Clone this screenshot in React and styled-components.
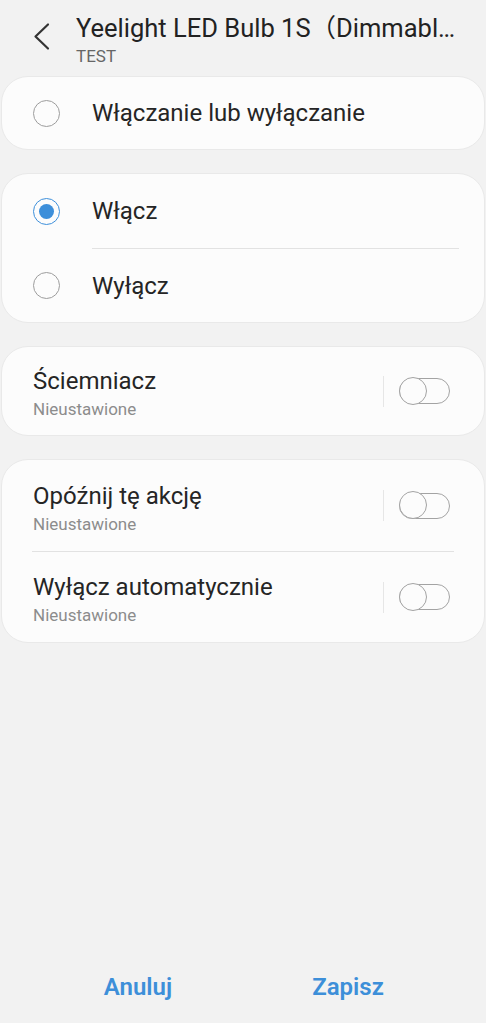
import React from "react"
import styled, { createGlobalStyle } from "styled-components"

const Global = createGlobalStyle`
  html, body {
    margin: 0;
    padding: 0;
    background: #f2f2f2;
  }
  body {
    font-family: Roboto, "Noto Sans CJK SC", "Liberation Sans", sans-serif;
    color: #252525;
  }
`

const Page = styled.div`
  min-height: 1023px;
  display: flex;
  flex-direction: column;
  background: #f2f2f2;
`

const Header = styled.header`
  display: flex;
  align-items: flex-start;
  padding: 13px 20px 0 28px;
  height: 63px;
  box-sizing: border-box;
  height: 76px;
`

const BackButton = styled.button`
  width: 28px;
  height: 46px;
  margin-right: 20px;
  padding: 0;
  border: 0;
  background: none;
  flex-shrink: 0;
`

const HeaderText = styled.div`
  display: flex;
  flex-direction: column;
  gap: 3px;
  min-width: 0;
  flex: 1;
`

const Title = styled.h1`
  margin: 0;
  font-size: 25.5px;
  line-height: 30px;
  font-weight: 400;
  color: #222;
  white-space: nowrap;
`

const Subtitle = styled.div`
  font-size: 17px;
  line-height: 20px;
  color: #666;
`

const Cards = styled.main`
  display: flex;
  flex-direction: column;
  gap: 23px;
  padding: 0 1px;
`

const Card = styled.section`
  background: #fcfcfc;
  border: 1px solid #e9e9e9;
  border-radius: 27px;
  overflow: hidden;
`

const RadioRow = styled.label`
  display: flex;
  align-items: center;
  height: ${p => p.$h || 72}px;
  padding-left: 31px;
  gap: 32px;
  font-size: 24px;
  line-height: 28px;
`

const Radio = styled.span`
  width: 27px;
  height: 27px;
  box-sizing: border-box;
  border-radius: 50%;
  border: 1.5px solid ${p => (p.$on ? "#3d8fda" : "#9c9c9c")};
  display: flex;
  align-items: center;
  justify-content: center;
  flex-shrink: 0;

  &::after {
    content: "";
    display: ${p => (p.$on ? "block" : "none")};
    width: 15px;
    height: 15px;
    border-radius: 50%;
    background: #3d8fda;
  }
`

const Divider = styled.div`
  height: 1px;
  background: #e2e2e2;
  margin: ${p => p.$inset};
`

const SwitchRow = styled.div`
  display: flex;
  align-items: center;
  height: ${p => p.$h}px;
  padding: 0 34px 0 31px;
`

const RowText = styled.div`
  flex: 1;
  display: flex;
  flex-direction: column;
  gap: 4px;
  padding-top: 4px;
`

const RowTitle = styled.div`
  font-size: 24px;
  line-height: 28px;
  color: #252525;
`

const RowSub = styled.div`
  font-size: 17px;
  line-height: 20px;
  color: #8c8c8c;
`

const VLine = styled.div`
  width: 1px;
  height: 31px;
  background: #e6e6e6;
  margin-right: 15px;
`

const Switch = styled.span`
  position: relative;
  width: 51px;
  height: 26px;
  box-sizing: border-box;
  border: 1.5px solid #a3a3a3;
  border-radius: 13px;

  &::before {
    content: "";
    position: absolute;
    left: -1.5px;
    top: -2.5px;
    width: 28px;
    height: 28px;
    box-sizing: border-box;
    border: 1.5px solid #a3a3a3;
    border-radius: 50%;
    background: #fcfcfc;
  }
`

const Spacer = styled.div`
  flex: 1;
`

const Footer = styled.footer`
  display: flex;
  height: 72px;
  align-items: center;
  padding: 0 33px;
`

const FooterButton = styled.button`
  flex: 1;
  border: 0;
  background: none;
  font-family: inherit;
  font-size: 24px;
  font-weight: 600;
  color: #3d8fd9;
  padding: 0;
`

const Chevron = () => (
  <svg width="28" height="46" viewBox="0 0 28 46">
    <path d="M20 11.5 L7.5 23.5 L20 35.5" fill="none" stroke="#333" strokeWidth="2.2" strokeLinecap="round" strokeLinejoin="round" />
  </svg>
)

const Toggle = () => (
  <>
    <VLine />
    <Switch />
  </>
)

export default function App() {
  return (
    <Page>
      <Global />
      <Header>
        <BackButton aria-label="Wstecz"><Chevron /></BackButton>
        <HeaderText>
          <Title>Yeelight LED Bulb 1S（Dimmabl…</Title>
          <Subtitle>TEST</Subtitle>
        </HeaderText>
      </Header>
      <Cards>
        <Card>
          <RadioRow><Radio />Włączanie lub wyłączanie</RadioRow>
        </Card>
        <Card>
          <RadioRow $h={74}><Radio $on />Włącz</RadioRow>
          <Divider $inset="0 25px 0 90px" />
          <RadioRow $h={73}><Radio />Wyłącz</RadioRow>
        </Card>
        <Card>
          <SwitchRow $h={88}>
            <RowText>
              <RowTitle>Ściemniacz</RowTitle>
              <RowSub>Nieustawione</RowSub>
            </RowText>
            <Toggle />
          </SwitchRow>
        </Card>
        <Card>
          <SwitchRow $h={91}>
            <RowText>
              <RowTitle>Opóźnij tę akcję</RowTitle>
              <RowSub>Nieustawione</RowSub>
            </RowText>
            <Toggle />
          </SwitchRow>
          <Divider $inset="0 30px 0 30px" />
          <SwitchRow $h={90}>
            <RowText>
              <RowTitle>Wyłącz automatycznie</RowTitle>
              <RowSub>Nieustawione</RowSub>
            </RowText>
            <Toggle />
          </SwitchRow>
        </Card>
      </Cards>
      <Spacer />
      <Footer>
        <FooterButton>Anuluj</FooterButton>
        <FooterButton>Zapisz</FooterButton>
      </Footer>
    </Page>
  )
}
